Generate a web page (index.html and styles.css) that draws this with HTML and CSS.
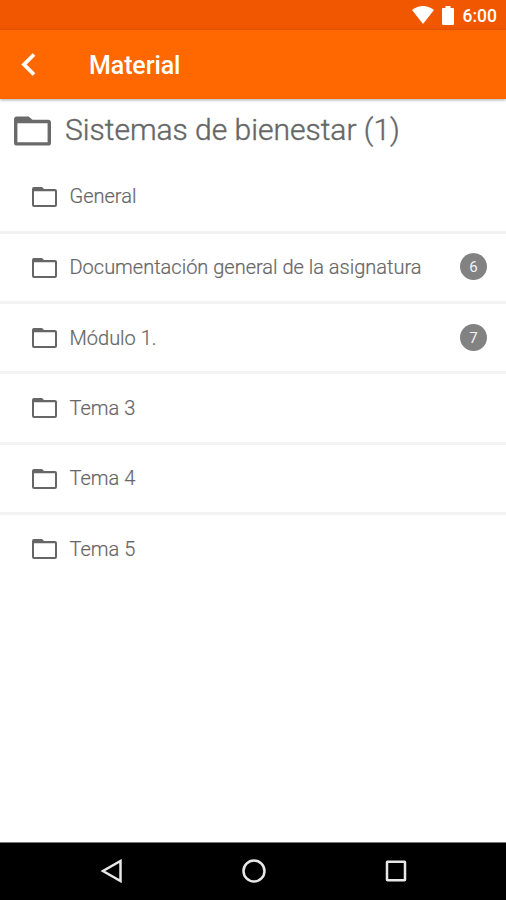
FILE: index.html
```html
<!DOCTYPE html>
<html lang="es">
<head>
<meta charset="utf-8">
<title>Material</title>
<link rel="stylesheet" href="styles.css">
</head>
<body>
<svg class="defs" aria-hidden="true">
  <symbol id="folder" viewBox="0 0 38 30">
    <path fill-rule="evenodd" d="M3 0H15L19 3.5H35Q38 3.5 38 6.5V27Q38 30 35 30H3Q0 30 0 27V3Q0 0 3 0ZM3.500 7V26.500H34.500V7Z"/>
  </symbol>
  <symbol id="folder-small" viewBox="0 0 25 20">
    <path fill-rule="evenodd" d="M2 0H10L12 2H23Q25 2 25 4V18Q25 20 23 20H2Q0 20 0 18V2Q0 0 2 0ZM2 4.300V18H23V4.300Z"/>
  </symbol>
</svg>
<div class="screen">
  <div class="status">
    <svg class="wifi" width="22" height="18" viewBox="0 0 22 18"><path d="M0 4Q11-4 22 4L11 18Z"/></svg>
    <svg class="battery" width="12" height="19" viewBox="0 0 12 19"><path d="M3.500 0H8.500V2H11Q12 2 12 3V18Q12 19 11 19H1Q0 19 0 18V3Q0 2 1 2H3.500Z"/></svg>
    <span class="clock">6:00</span>
  </div>
  <header class="bar">
    <svg class="back" width="15" height="23" viewBox="0 0 15 23"><path d="M13 1.500L3 11.500L13 21.500"/></svg>
    <h1 class="title">Material</h1>
  </header>
  <main class="content">
    <div class="course"><svg class="folder-lg"><use href="#folder"/></svg><h2 class="course-name">Sistemas de bienestar (1)</h2></div>
    <ul class="list">
      <li class="row"><svg class="folder"><use href="#folder-small"/></svg><span class="name">General</span></li>
      <li class="row"><svg class="folder"><use href="#folder-small"/></svg><span class="name">Documentación general de la asignatura</span><span class="badge">6</span></li>
      <li class="row"><svg class="folder"><use href="#folder-small"/></svg><span class="name">Módulo 1.</span><span class="badge">7</span></li>
      <li class="row"><svg class="folder"><use href="#folder-small"/></svg><span class="name">Tema 3</span></li>
      <li class="row"><svg class="folder"><use href="#folder-small"/></svg><span class="name">Tema 4</span></li>
      <li class="row"><svg class="folder"><use href="#folder-small"/></svg><span class="name">Tema 5</span></li>
    </ul>
  </main>
  <nav class="nav">
    <svg width="24" height="24" viewBox="0 0 24 24"><path d="M20.500 2V22L3 12Z"/></svg>
    <svg width="24" height="24" viewBox="0 0 24 24"><circle cx="12" cy="12" r="10.500"/></svg>
    <svg width="24" height="24" viewBox="0 0 24 24"><rect x="3" y="2.700" width="18" height="18.500" rx=".5"/></svg>
  </nav>
</div>
</body>
</html>
```
FILE: styles.css
```css
* { box-sizing: border-box; }
body { margin: 0; font-family: Roboto, sans-serif; background: #fff; }
.defs { position: absolute; width: 0; height: 0; }
.screen { height: 900px; display: flex; flex-direction: column; overflow: hidden; }
.status { height: 30px; flex: none; background: #f05700; color: #fff; display: flex; align-items: center; justify-content: flex-end; padding-right: 9px; }
.status svg { fill: #fff; }
.wifi { margin-right: 8px; }
.battery { margin-right: 9px; }
.clock { font-size: 17.5px; font-weight: 500; line-height: 20px; padding-top: 2px; }
.bar { height: 69px; flex: none; background: #ff6700; color: #fff; display: flex; align-items: center; padding-left: 21px; box-shadow: 0 1px 3px rgba(0, 0, 0, .35); }
.back { fill: none; stroke: #fff; stroke-width: 3.8; }
.title { margin: 2px 0 0 53px; font-size: 25px; line-height: 30px; font-weight: 500; letter-spacing: -0.1px; }
.content { flex: 1; }
.course { height: 62px; display: flex; align-items: center; padding-left: 14px; }
.folder-lg { width: 37px; height: 30px; fill: #6a6a6a; margin-top: 1px; }
.course-name { margin: 0 0 0 14px; font-size: 30px; line-height: 36px; font-weight: 300; color: #666; -webkit-text-stroke: .4px #666; }
.list { list-style: none; margin: 0; padding: 0; }
.row { height: 70.3px; display: flex; align-items: center; padding: 1px 19px 0 32px; border-bottom: 3px solid #f3f3f3; color: #666; }
.row:last-child { border-bottom-color: transparent; }
.row:first-child { height: 72.7px; padding-top: 2px; }
.folder { width: 25px; height: 20px; fill: #666; flex: none; }
.name { flex: 1; margin-left: 12.5px; font-size: 20px; line-height: 24px; font-weight: 300; white-space: nowrap; -webkit-text-stroke: .2px #666; margin-top: -1px; }
.badge { width: 27px; height: 27px; flex: none; border-radius: 50%; background: #828282; color: #f2f2f2; font-size: 15px; line-height: 28px; text-align: center; margin-top: -2px; }
.nav { height: 58px; flex: none; background: #000; border-top: 1px solid #777; display: flex; align-items: center; justify-content: space-between; padding: 0 98px 1px 100px; }
.nav svg { fill: none; stroke: #e8e8e8; stroke-width: 2.5; }
```
